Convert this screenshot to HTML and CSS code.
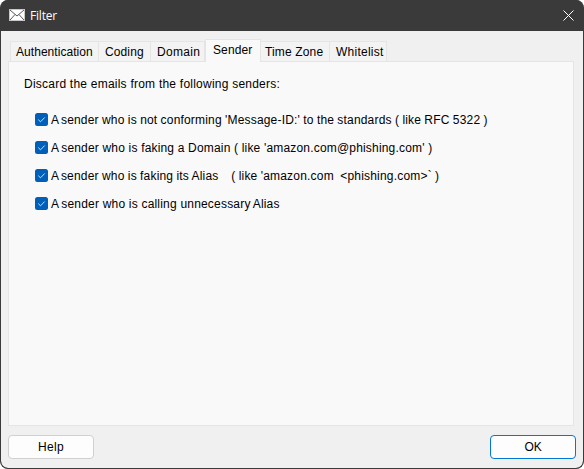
FILE: index.html
```html
<!DOCTYPE html>
<html lang="en">
<head>
<meta charset="utf-8">
<title>Filter</title>
<link rel="stylesheet" href="styles.css">
</head>
<body>
<div class="window">
  <header class="titlebar">
    <svg class="mail" width="16" height="12" viewBox="0 0 16 12">
      <rect x=".5" y=".5" width="15" height="11" fill="#fff" stroke="#c8c8c8"/>
      <path d="M1 1l7 6 7-6M1 11l5-5.500M15 11l-5-5.500" fill="none" stroke="#555" stroke-width="1"/>
    </svg>
    <span class="title">Filter</span>
    <svg class="close" width="11" height="11" viewBox="0 0 11 11"><path d="M.5.5l10 10M10.500.5l-10 10" stroke="#fff" fill="none"/></svg>
  </header>
  <main class="content">
    <nav class="tabs">
      <div class="tab auth">Authentication</div>
      <div class="tab coding">Coding</div>
      <div class="tab domain">Domain</div>
      <div class="tab sender selected">Sender</div>
      <div class="tab zone">Time Zone</div>
      <div class="tab white">Whitelist</div>
    </nav>
    <section class="panel">
      <p class="intro">Discard the emails from the following senders:</p>
      <div class="option"><span class="check"><svg width="13" height="13" viewBox="0 0 13 13"><path d="M3.300 6.700l2.200 2.100 4.200-4.300"/></svg></span><span class="label l1"><span class="a">A</span> sender who is not conforming 'Message-ID:' to the standards ( like RFC 5322 )</span></div>
      <div class="option"><span class="check"><svg width="13" height="13" viewBox="0 0 13 13"><path d="M3.300 6.700l2.200 2.100 4.200-4.300"/></svg></span><span class="label l2"><span class="a">A</span> sender who is faking a Domain ( like 'amazon.com@phishing.com' )</span></div>
      <div class="option"><span class="check"><svg width="13" height="13" viewBox="0 0 13 13"><path d="M3.300 6.700l2.200 2.100 4.200-4.300"/></svg></span><span class="label l3"><span class="a">A</span> sender who is faking its Alias    ( like 'amazon.com  &lt;phishing.com&gt;` )</span></div>
      <div class="option"><span class="check"><svg width="13" height="13" viewBox="0 0 13 13"><path d="M3.300 6.700l2.200 2.100 4.200-4.300"/></svg></span><span class="label l4"><span class="a">A</span> sender who is calling unnecessary<span class="y"> </span>Alias</span></div>
    </section>
    <footer class="buttons">
      <button class="help">Help</button>
      <button class="ok">OK</button>
    </footer>
  </main>
</div>
</body>
</html>
```
FILE: styles.css
```css
* { box-sizing: border-box; }
body { margin: 0; background: #fff; overflow: hidden; font: 12px/16px "Liberation Sans", Arial, sans-serif; color: #000; }
.window { width: 584px; height: 469px; border: 1px solid #3a3a3a; border-top: 0; border-radius: 8px; background: #3a3a3a; overflow: hidden; display: flex; flex-direction: column; }
.titlebar { height: 31px; flex: none; display: flex; align-items: center; padding: 0 9px 0 8px; color: #fff; background: #3a3a3a; }
.mail { flex: none; margin-top: -1px; }
.title { margin-left: 5px; font: 12px/16px "Open Sans", "Noto Sans", sans-serif; letter-spacing: -.2px; }
.close { margin-left: auto; margin-top: -1px; }
.content { flex: 1; background: #f0f0f0; padding: 8px 7px 9px 7px; display: flex; flex-direction: column; border-radius: 0 0 7px 7px; }
.tabs { height: 22px; flex: none; display: flex; align-items: flex-end; padding-left: 2px; }
.tab { height: 20px; padding: 2px 0 0 5px; background: #f3f3f3; border: 1px solid #e5e5e5; border-width: 1px 1px 0 0; white-space: nowrap; }
.auth { width: 89px; border-left-width: 1px; letter-spacing: .05px; }
.coding { width: 52px; padding-left: 6px; letter-spacing: .12px; }
.domain { width: 54px; padding-left: 6px; letter-spacing: .3px; }
.sender { width: 56px; padding-left: 7px; letter-spacing: .12px; }
.zone { width: 69px; padding-left: 4px; letter-spacing: .15px; }
.white { width: 57px; padding-left: 6px; letter-spacing: .25px; }
.tab.selected { height: 23px; margin-bottom: -1px; background: #f9f9f9; border-left-width: 1px; z-index: 1; }
.panel { width: 566px; height: 365px; flex: none; background: #f9f9f9; border: 1px solid #e5e5e5; padding: 14px 0 0 15px; }
.intro { margin: 0 0 20px; white-space: pre; letter-spacing: .23px; }
.option { height: 16px; margin: 0 0 12px 11px; display: flex; align-items: center; }
.check { width: 13px; height: 13px; margin-top: -1px; background: #005fb8; border-radius: 2.500px; flex: none; }
.check svg { display: block; }
.check path { fill: none; stroke: #cfe1f3; stroke-width: 1; }
.label { margin-left: 3px; white-space: pre; letter-spacing: .2px; }
.a { letter-spacing: -1.300px; }
.y { letter-spacing: -1.300px; }
.l1 { letter-spacing: .18px; word-spacing: -.25px; }
.l2 { letter-spacing: .18px; }
.l3 { word-spacing: -.35px; }
.buttons { display: flex; justify-content: space-between; margin-top: 9px; }
button { width: 86px; height: 24px; padding: 0; background: #fdfdfd; border: 1px solid #d0d0d0; border-radius: 4px; font: inherit; color: #000; }
.help { letter-spacing: .3px; }
.ok { border-color: #0078d4; letter-spacing: -.2px; }
```
